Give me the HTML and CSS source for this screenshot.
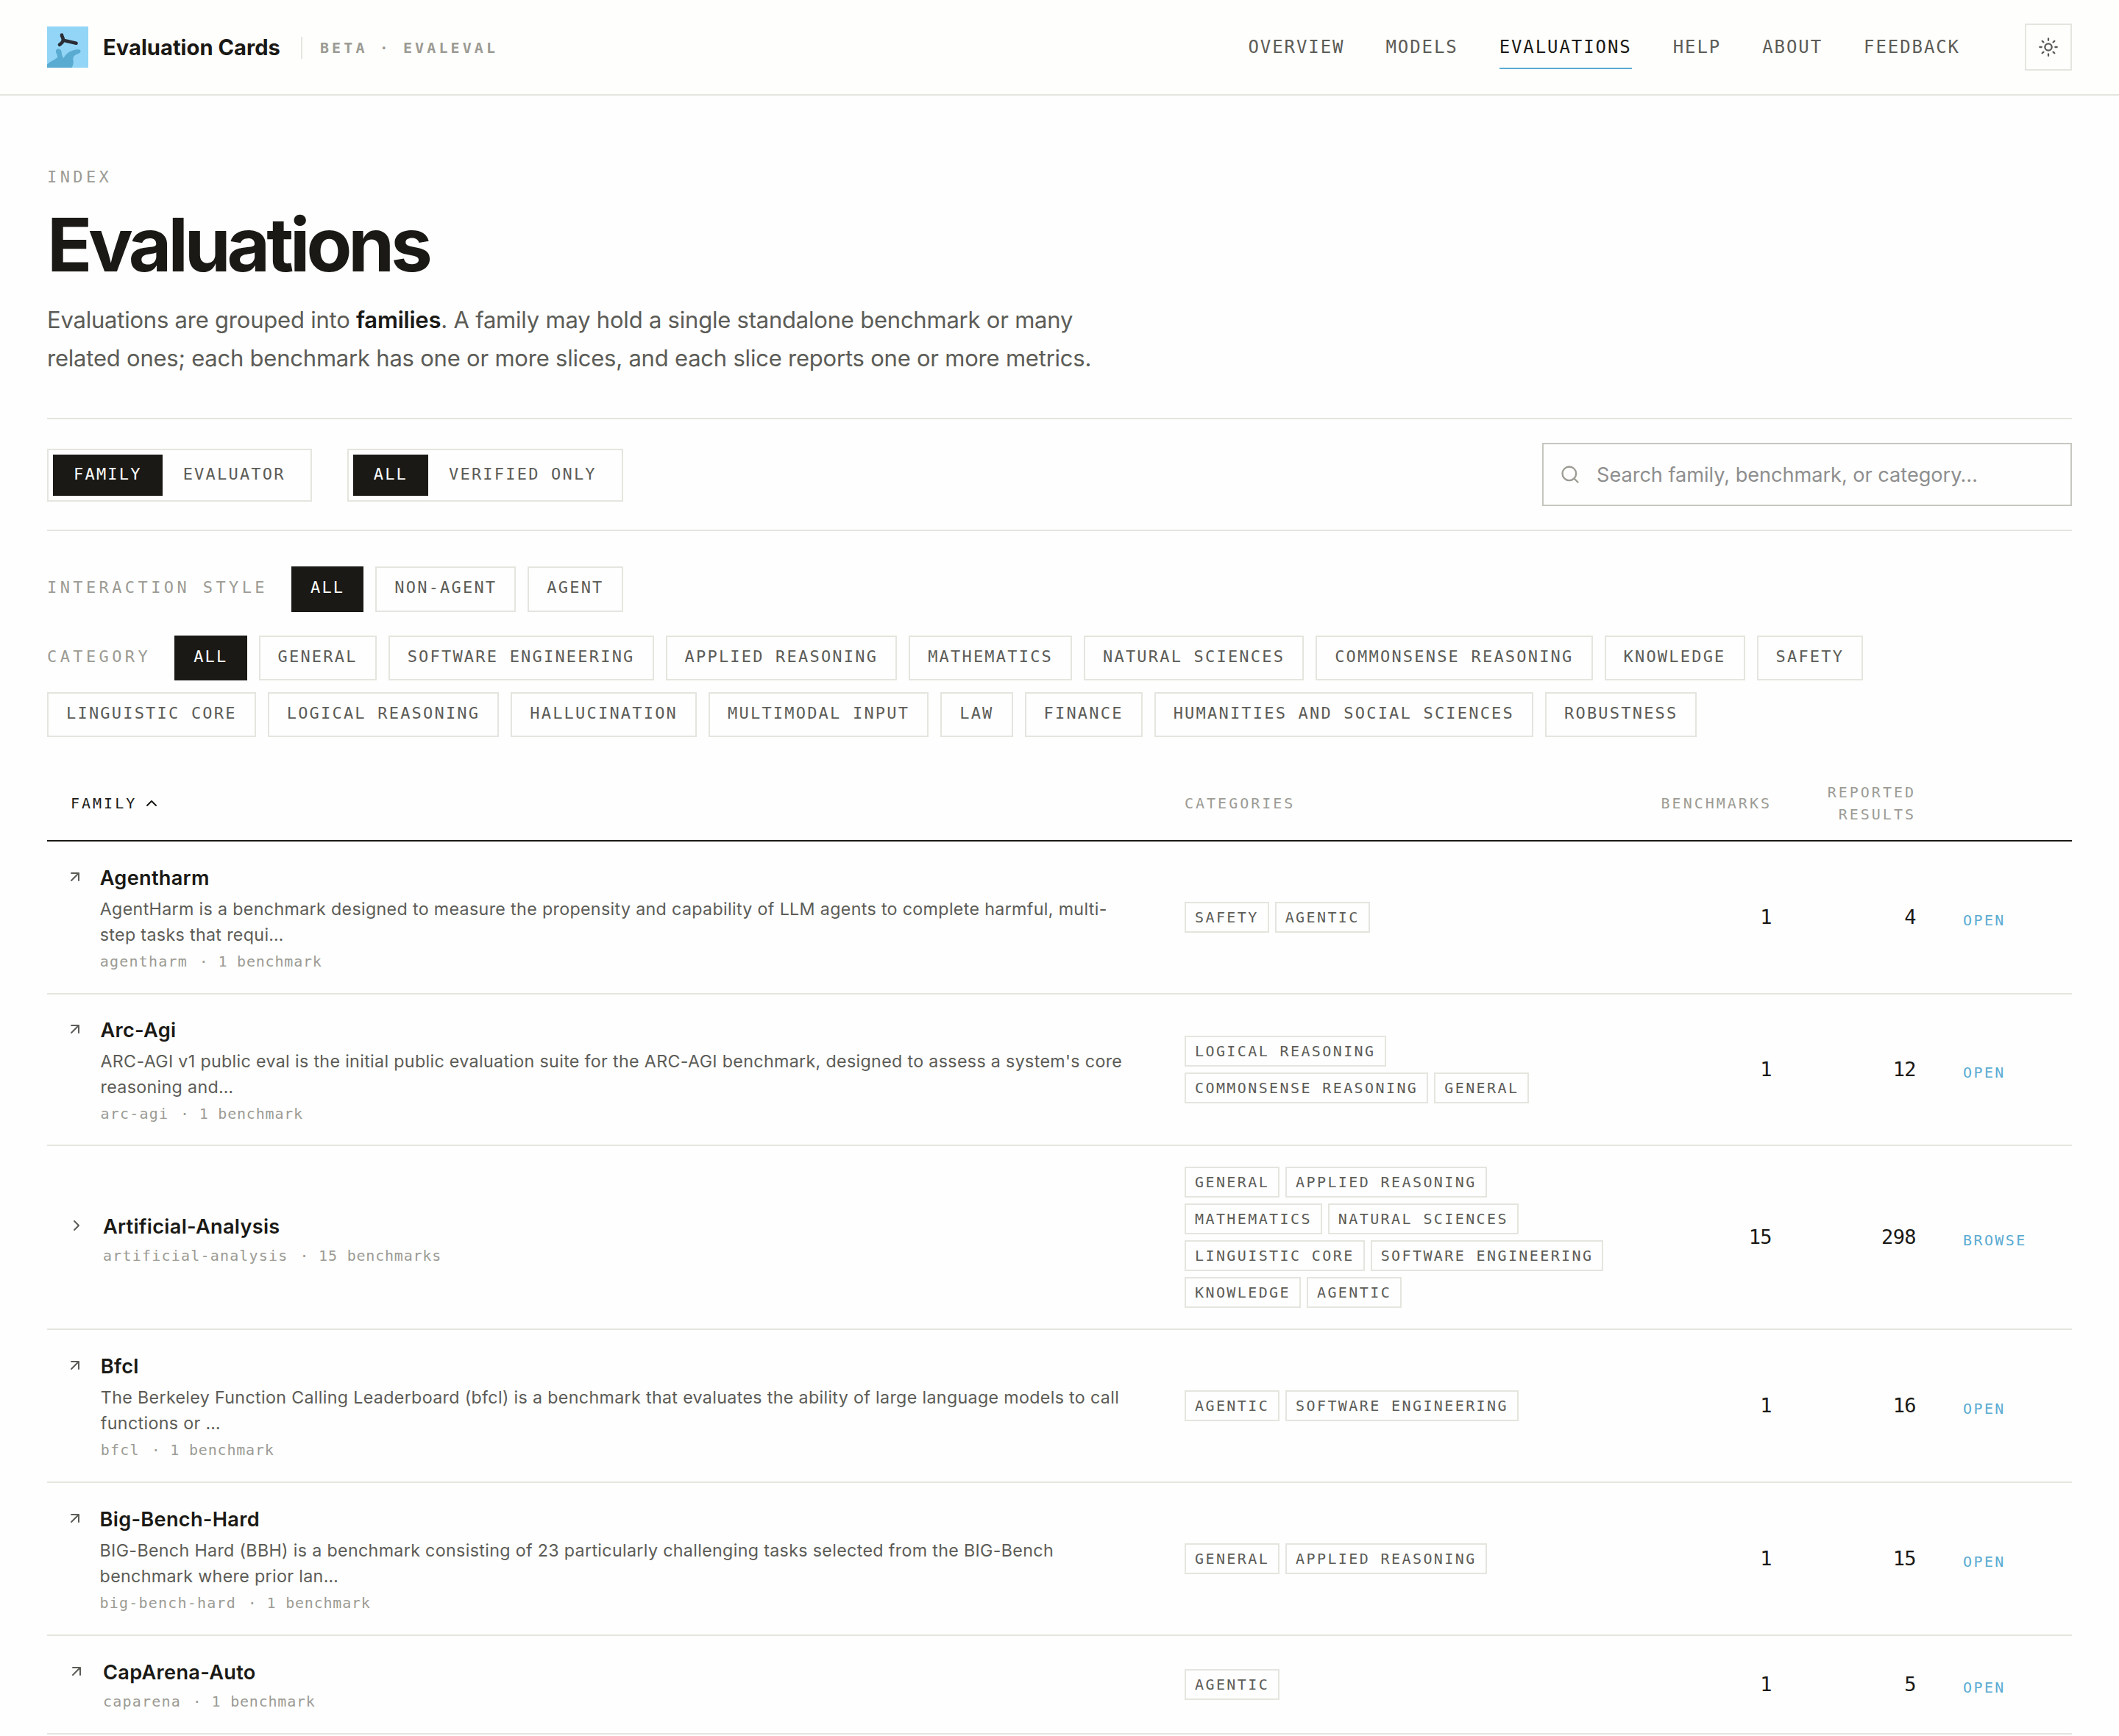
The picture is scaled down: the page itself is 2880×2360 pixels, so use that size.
FILE: index.html
```html
<!DOCTYPE html>
<html lang="en">
<head>
    <meta charset="UTF-8">
    <meta name="viewport" content="width=device-width, initial-scale=1.0">
    <title>Evaluations - Evaluation Cards</title>
    <link rel="stylesheet" href="styles.css">
</head>
<body>

    <!-- Shared icons -->
    <svg class="sprite" aria-hidden="true">
        <symbol id="icon-arrow" viewBox="0 0 24 24"><path d="M7 7h10v10M7 17 17 7"/></symbol>
        <symbol id="icon-right" viewBox="0 0 24 24"><path d="m9 18 6-6-6-6"/></symbol>
        <symbol id="icon-up" viewBox="0 0 24 24"><path d="m18 15-6-6-6 6"/></symbol>
    </svg>

    <header class="site-header">
        <div class="brand">
            <svg class="logo" viewBox="0 0 56 56">
                <rect width="56" height="56" fill="#93d5f6"/>
                <path fill="#5aabd2" d="M0 51.500C5 47 11 45 14 42C15 39 11 36 12 32.500C14 29 18.500 30 19.500 34C20 37 20 40 22.500 43C25 38 29 34 36 32.200C41 31 46 30.500 45.500 34C44.500 38 38 37 36 41.500C34 45 38 49 33.500 56H0Z"/>
                <path fill="none" stroke="#2b2d36" stroke-width="4.700" stroke-linecap="round" stroke-linejoin="round" d="M20 11.700C20 14 22.300 15 21.800 19C21 22 19 23 17 24.800M22 18.800L39.500 22.700"/>
            </svg>
            <span class="brand-name">Evaluation Cards</span>
            <span class="brand-tag">BETA · EVALEVAL</span>
        </div>
        <nav>
            <a href="#">OVERVIEW</a>
            <a href="#">MODELS</a>
            <a href="#" class="active">EVALUATIONS</a>
            <a href="#">HELP</a>
            <a href="#">ABOUT</a>
            <a href="#">FEEDBACK</a>
            <button class="theme-btn" aria-label="Theme">
                <svg class="icon" viewBox="0 0 24 24"><circle cx="12" cy="12" r="4"/><path d="M12 2v2M12 20v2M4.900 4.900l1.400 1.400M17.700 17.700l1.400 1.400M2 12h2M20 12h2M6.300 17.700l-1.400 1.400M19.100 4.900l-1.400 1.400"/></svg>
            </button>
        </nav>
    </header>

    <main>
        <div class="eyebrow">INDEX</div>
        <h1>Evaluations</h1>
        <p class="lead">Evaluations are grouped into <strong>families</strong>. A family may hold a single standalone benchmark or many related ones; each benchmark has one or more slices, and each slice reports one or more metrics.</p>

        <div class="toolbar">
            <div class="toggle">
                <button class="on">FAMILY</button>
                <button>EVALUATOR</button>
            </div>
            <div class="toggle">
                <button class="on">ALL</button>
                <button>VERIFIED ONLY</button>
            </div>
            <div class="search">
                <svg class="icon" viewBox="0 0 24 24"><circle cx="11" cy="11" r="8"/><path d="m21 21-4.300-4.300"/></svg>
                <input type="text" placeholder="Search family, benchmark, or category…">
            </div>
        </div>

        <!-- Filters -->
        <div class="filters style-filters">
            <span class="filter-label">INTERACTION STYLE</span>
            <button class="chip on">ALL</button>
            <button class="chip">NON-AGENT</button>
            <button class="chip">AGENT</button>
        </div>
        <div class="filters category-filters">
            <span class="filter-label">CATEGORY</span>
            <button class="chip on">ALL</button>
            <button class="chip">GENERAL</button>
            <button class="chip">SOFTWARE ENGINEERING</button>
            <button class="chip">APPLIED REASONING</button>
            <button class="chip">MATHEMATICS</button>
            <button class="chip">NATURAL SCIENCES</button>
            <button class="chip">COMMONSENSE REASONING</button>
            <button class="chip">KNOWLEDGE</button>
            <button class="chip">SAFETY</button>
            <button class="chip">LINGUISTIC CORE</button>
            <button class="chip">LOGICAL REASONING</button>
            <button class="chip">HALLUCINATION</button>
            <button class="chip">MULTIMODAL INPUT</button>
            <button class="chip">LAW</button>
            <button class="chip">FINANCE</button>
            <button class="chip">HUMANITIES AND SOCIAL SCIENCES</button>
            <button class="chip">ROBUSTNESS</button>
        </div>

        <!-- Families table -->
        <div class="table">
            <div class="row head">
                <div class="sorted">FAMILY <svg class="icon"><use href="#icon-up"/></svg></div>
                <div>CATEGORIES</div>
                <div class="num">BENCHMARKS</div>
                <div class="num">REPORTED RESULTS</div>
                <div></div>
            </div>

            <div class="row">
                <div class="family">
                    <span class="mark"><svg class="icon"><use href="#icon-arrow"/></svg></span>
                    <div class="info">
                        <div class="name">Agentharm</div>
                        <div class="desc">AgentHarm is a benchmark designed to measure the propensity and capability of LLM agents to complete harmful, multi-step tasks that requi…</div>
                        <div class="meta"><span class="slug">agentharm</span> · 1 benchmark</div>
                    </div>
                </div>
                <div class="tags"><span>SAFETY</span><span>AGENTIC</span></div>
                <div class="num">1</div>
                <div class="num">4</div>
                <a href="#" class="open">OPEN</a>
            </div>

            <div class="row short-row">
                <div class="family">
                    <span class="mark"><svg class="icon"><use href="#icon-arrow"/></svg></span>
                    <div class="info">
                        <div class="name">Arc-Agi</div>
                        <div class="desc">ARC-AGI v1 public eval is the initial public evaluation suite for the ARC-AGI benchmark, designed to assess a system's core reasoning and…</div>
                        <div class="meta"><span class="slug">arc-agi</span> · 1 benchmark</div>
                    </div>
                </div>
                <div class="tags"><span>LOGICAL REASONING</span><span>COMMONSENSE REASONING</span><span>GENERAL</span></div>
                <div class="num">1</div>
                <div class="num">12</div>
                <a href="#" class="open">OPEN</a>
            </div>

            <div class="row tall-row">
                <div class="family">
                    <span class="mark"><svg class="icon"><use href="#icon-right"/></svg></span>
                    <div class="info">
                        <div class="name">Artificial-Analysis</div>
                        <div class="meta"><span class="slug">artificial-analysis</span> · 15 benchmarks</div>
                    </div>
                </div>
                <div class="tags"><span>GENERAL</span><span>APPLIED REASONING</span><span>MATHEMATICS</span><span>NATURAL SCIENCES</span><span>LINGUISTIC CORE</span><span>SOFTWARE ENGINEERING</span><span>KNOWLEDGE</span><span>AGENTIC</span></div>
                <div class="num">15</div>
                <div class="num">298</div>
                <a href="#" class="open">BROWSE</a>
            </div>

            <div class="row">
                <div class="family">
                    <span class="mark"><svg class="icon"><use href="#icon-arrow"/></svg></span>
                    <div class="info">
                        <div class="name">Bfcl</div>
                        <div class="desc">The Berkeley Function Calling Leaderboard (bfcl) is a benchmark that evaluates the ability of large language models to call functions or …</div>
                        <div class="meta"><span class="slug">bfcl</span> · 1 benchmark</div>
                    </div>
                </div>
                <div class="tags"><span>AGENTIC</span><span>SOFTWARE ENGINEERING</span></div>
                <div class="num">1</div>
                <div class="num">16</div>
                <a href="#" class="open">OPEN</a>
            </div>

            <div class="row">
                <div class="family">
                    <span class="mark"><svg class="icon"><use href="#icon-arrow"/></svg></span>
                    <div class="info">
                        <div class="name">Big-Bench-Hard</div>
                        <div class="desc">BIG-Bench Hard (BBH) is a benchmark consisting of 23 particularly challenging tasks selected from the BIG-Bench benchmark where prior lan…</div>
                        <div class="meta"><span class="slug">big-bench-hard</span> · 1 benchmark</div>
                    </div>
                </div>
                <div class="tags"><span>GENERAL</span><span>APPLIED REASONING</span></div>
                <div class="num">1</div>
                <div class="num">15</div>
                <a href="#" class="open">OPEN</a>
            </div>

            <div class="row last-row">
                <div class="family">
                    <span class="mark"><svg class="icon"><use href="#icon-arrow"/></svg></span>
                    <div class="info">
                        <div class="name">CapArena-Auto</div>
                        <div class="meta"><span class="slug">caparena</span> · 1 benchmark</div>
                    </div>
                </div>
                <div class="tags"><span>AGENTIC</span></div>
                <div class="num">1</div>
                <div class="num">5</div>
                <a href="#" class="open">OPEN</a>
            </div>
        </div>
    </main>

</body>
</html>
```
FILE: styles.css
```css
* {
    box-sizing: border-box;
}

body {
    margin: 0;
    background: #fefefe;
    color: #1a1915;
    font-family: Inter, "Liberation Sans", sans-serif;
    font-size: 27.2px;
    line-height: 44px;
}

a {
    color: inherit;
    text-decoration: none;
}

button {
    margin: 0;
    border: 0;
    background: none;
    color: #5c5c57;
    font: 22px/34px "DejaVu Sans Mono", monospace;
    letter-spacing: 0.1em;
    white-space: nowrap;
}

.sprite {
    display: none;
}

.icon {
    display: block;
    flex: none;
    width: 24px;
    height: 24px;
    fill: none;
    stroke: currentColor;
    stroke-width: 2;
    stroke-linecap: round;
    stroke-linejoin: round;
}

/* Header */
.site-header {
    display: flex;
    justify-content: space-between;
    align-items: center;
    height: 130px;
    padding: 0 64px;
    background: #fefefc;
    border-bottom: 2px solid #e5e5df;
}

.brand {
    display: flex;
    align-items: center;
}

.logo {
    width: 56px;
    height: 56px;
    margin-right: 20px;
}

.brand-name {
    margin-right: 28px;
    padding-top: 2px;
    font-size: 29.2px;
    font-weight: 700;
}

.brand-tag {
    height: 30px;
    margin-top: 2px;
    padding-left: 24px;
    border-left: 2px solid #e5e5df;
    color: #9c9b94;
    font: bold 20px/30px "DejaVu Sans Mono", monospace;
    letter-spacing: 0.205em;
}

nav {
    display: flex;
    align-items: center;
    gap: 56px;
}

nav a {
    height: 60px;
    border-bottom: 2px solid transparent;
    color: #5c5c57;
    font: 24px/60px "DejaVu Sans Mono", monospace;
    letter-spacing: 0.08em;
}

nav a.active {
    color: #1a1915;
    border-color: #5aabd2;
}

.theme-btn {
    display: flex;
    align-items: center;
    justify-content: center;
    width: 64px;
    height: 64px;
    margin-left: 32px;
    padding: 0;
    border: 2px solid #e5e5df;
}

.theme-btn .icon {
    width: 28px;
    height: 28px;
}

/* Intro */
main {
    padding: 92px 64px 0;
}

.eyebrow {
    color: #9c9b94;
    font: 22px/37px "DejaVu Sans Mono", monospace;
    letter-spacing: 0.2em;
}

h1 {
    margin: 17px 0 0;
    font-size: 101px;
    font-weight: 700;
    line-height: 112px;
    letter-spacing: -0.05em;
}

.lead {
    width: 1440px;
    margin: 21px 0 0;
    color: #5c5c57;
    font-size: 31px;
    line-height: 52px;
    letter-spacing: -0.007em;
}

.lead strong {
    color: #1a1915;
    font-weight: 600;
}

/* Toolbar */
.toolbar {
    display: flex;
    align-items: center;
    gap: 48px;
    height: 154px;
    margin-top: 55px;
    border-top: 2px solid #e5e5df;
    border-bottom: 2px solid #e5e5df;
}

.toggle {
    display: flex;
    height: 72px;
    margin-top: 2px;
    padding: 6px;
    border: 2px solid #e5e5df;
}

.toggle button {
    padding: 10px 28px 12px;
}

.toggle .on,
.chip.on {
    background: #1a1915;
    color: #fefefe;
}

.search {
    display: flex;
    align-items: center;
    gap: 22px;
    width: 720px;
    height: 86px;
    margin-left: auto;
    padding: 0 22px;
    border: 2px solid #c7c7c0;
    color: #9c9b94;
}

.search .icon {
    width: 28px;
    height: 28px;
}

.search input {
    flex: 1;
    padding: 2px 0 0;
    border: 0;
    background: none;
    font: 27.2px/40px Inter, sans-serif;
    letter-spacing: -0.002em;
}

.search input::placeholder {
    color: #8e8e8e;
}

/* Filters */
.filters {
    display: flex;
    flex-wrap: wrap;
    gap: 16px;
}

.style-filters {
    margin-top: 48px;
}

.category-filters {
    margin-top: 32px;
    padding-right: 20px;
}

.filter-label {
    margin-right: 16px;
    color: #9c9b94;
    font: 22px/58px "DejaVu Sans Mono", monospace;
    letter-spacing: 0.2em;
}

.chip {
    height: 62px;
    padding: 10px 24px 14px;
    border: 2px solid #e5e5df;
}

.category-filters .chip {
    height: 61px;
}

.chip.on {
    border-color: #1a1915;
}

/* Table */
.table {
    margin-top: 40px;
}

.row {
    display: grid;
    grid-template-columns: 1546px 598px 200px 196px 1fr;
    align-items: center;
    height: 208px;
    border-bottom: 2px solid #e5e5df;
}

.short-row {
    height: 206px;
}

.tall-row {
    height: 250px;
}

.last-row {
    height: 134px;
}

.head {
    height: 102px;
    border-color: #1a1915;
    color: #9c9b94;
    font: 20px/30px "DejaVu Sans Mono", monospace;
    letter-spacing: 0.15em;
}

.sorted {
    display: flex;
    align-items: center;
    gap: 8px;
    padding-left: 32px;
    color: #1a1915;
}

.num {
    text-align: right;
    font-family: "DejaVu Sans Mono", monospace;
}

.row:not(.head) .num {
    font-size: 27px;
    letter-spacing: -0.6px;
}

.family {
    display: flex;
    gap: 20px;
    padding: 0 72px 0 24px;
}

.tall-row .family {
    margin-top: 3px;
}

.mark {
    display: flex;
    justify-content: center;
    width: 32px;
    min-width: 0;
    padding-top: 8px;
    color: #5c5c57;
}

.name {
    font-weight: 600;
    letter-spacing: 0.01em;
}

.desc {
    margin: 2px 0;
    color: #5c5c57;
    font-size: 23.25px;
    line-height: 35px;
    letter-spacing: 0.33px;
}

.meta {
    padding-top: 2px;
    color: #9c9b94;
    font: 20px/30px "DejaVu Sans Mono", monospace;
    letter-spacing: 0.04em;
}

.slug {
    margin-right: 3px;
    letter-spacing: 0.06em;
}

.tags {
    display: flex;
    flex-wrap: wrap;
    gap: 8px;
}

.tags span {
    height: 42px;
    padding: 0 12px;
    border: 2px solid #e5e5df;
    color: #5c5c57;
    font: 20px/38px "DejaVu Sans Mono", monospace;
    letter-spacing: 0.12em;
}

.open {
    padding: 8px 0 0 64px;
    color: #5aabd2;
    font: 20px/30px "DejaVu Sans Mono", monospace;
    letter-spacing: 0.12em;
}
```
